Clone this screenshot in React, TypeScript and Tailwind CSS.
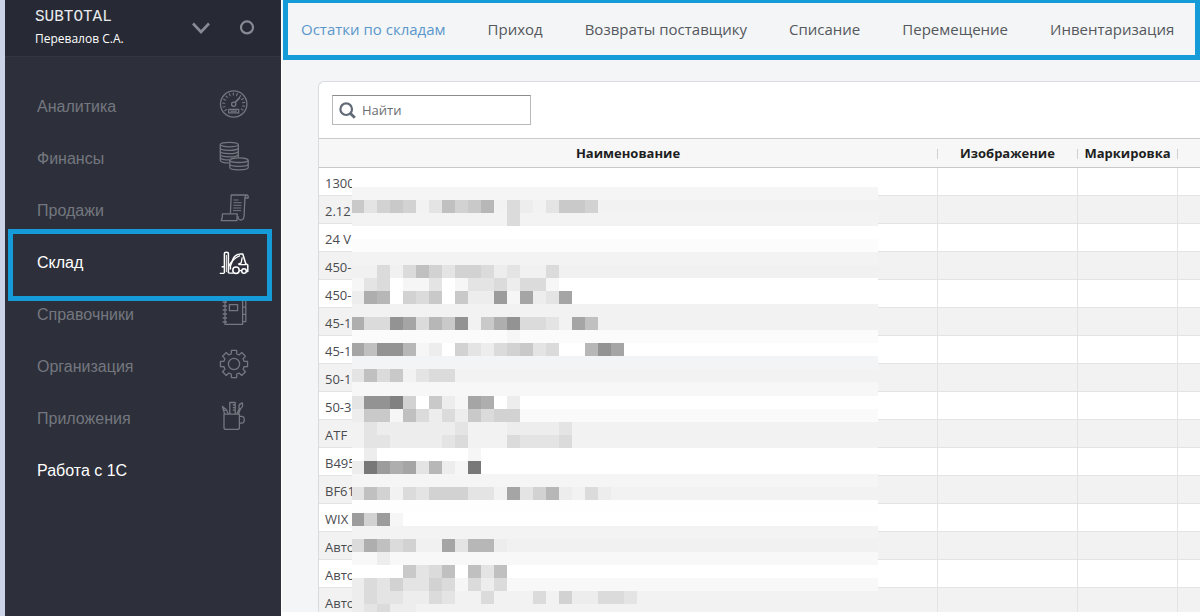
import clsx from "clsx";
import type { ReactNode } from "react";

type MenuItem = { label: string; icon?: ReactNode; state?: "active" | "plain" };

// one string per mosaic line: "." is the row background, 1-f goes from light to dark
type MosaicRow = { base: string; cells: string };

const gearPath = () => {
  const points: string[] = [];
  for (let i = 0; i < 8; i++) {
    const mid = (i * Math.PI) / 4;
    [
      [10.4, -0.27],
      [13.8, -0.19],
      [13.8, 0.19],
      [10.4, 0.27],
    ].forEach(([r, a]) => {
      points.push(
        `${(15 + r! * Math.cos(mid + a!)).toFixed(2)} ${(15 + r! * Math.sin(mid + a!)).toFixed(2)}`,
      );
    });
  }
  return `M${points.join("L")}Z`;
};

const Icon = ({ children }: { children: ReactNode }) => (
  <svg
    viewBox="0 0 30 30"
    className="mb-1.5 h-[30px] w-[30px]"
    fill="none"
    stroke="currentColor"
    strokeWidth="1.3"
    strokeLinejoin="round"
    aria-hidden="true"
  >
    {children}
  </svg>
);

const menu: MenuItem[] = [
  {
    label: "Аналитика",
    icon: (
      <Icon>
        <circle cx="14.7" cy="15" r="13.2" />
        <path
          d="M7 21.5A10 10 0 1 1 22.4 21.5"
          strokeWidth="3"
          strokeDasharray="1.1 2.5"
        />
        <circle cx="14.7" cy="15.3" r="2.1" />
        <path d="M16 13.6L21 8.4" strokeWidth="1.6" />
        <rect x="9.7" y="20.3" width="10" height="3.6" />
        <path d="M11.5 22.1h6.4" />
      </Icon>
    ),
  },
  {
    label: "Финансы",
    icon: (
      <Icon>
        <ellipse cx="10.3" cy="3.6" rx="9" ry="2.3" />
        <path d="M1.3 3.6V19.6c0 1.3 4 2.4 8.6 2.3M19.3 3.6v13" />
        <path d="M1.3 7c0 3.1 18 3.1 18 0M1.3 10.3c0 3.1 18 3.1 18 0M1.3 13.6c0 3.1 18 3.1 18 0M1.3 16.6c0 1.6 4.2 2.4 9 2.3" />
        <ellipse cx="20" cy="19.2" rx="9.2" ry="2.3" />
        <path d="M10.8 19.2v7.4c0 3.1 18.4 3.1 18.4 0v-7.4M10.8 23c0 3.1 18.4 3.1 18.4 0" />
      </Icon>
    ),
  },
  {
    label: "Продажи",
    icon: (
      <Icon>
        <path d="M11.4 20.5L12.2 2H27.4c1.5 0 2.2 1.2 1.7 3h-3.2" />
        <path d="M27.4 2c-1 .6-1.4 1.5-1.5 3l-.8 18c-.3 3-1.4 4-3.3 4-2 0-2.9-1.4-2.6-3.8" />
        <path d="M3.5 20.8h14.8l-.4 6.8H2.2c1-1.8 1.4-4 1.3-6.8Z" />
        <path d="M14.5 7h5M14.5 9.7h8M14.3 12.3h8M14.2 15h8M14 17.6h8" strokeWidth="1" />
      </Icon>
    ),
  },
  {
    label: "Склад",
    state: "active",
    icon: (
      <Icon>
        <path d="M5.4 28V8.8c0-2 4-2 4 0V28" strokeWidth="1.5" />
        <path d="M7.4 10v17" strokeWidth="0.9" />
        <path d="M.8 28.4h4.6M2.6 21.8h2.8" strokeWidth="1.4" />
        <path
          d="M11.4 24.6V21l1.6-4C14.4 11.6 16.8 9 21.4 9h2.4l2.8 9.3 2.2 1.7v6.6h-1.4"
          strokeWidth="1.5"
        />
        <path d="M9.6 21.6C12 16.4 16 12.6 21 10.6M19 19.4l3.2-1.6 1-5.4M20 19.6h7.6" />
        <circle cx="17" cy="25.2" r="3.2" strokeWidth="1.5" />
        <circle cx="25" cy="26" r="2.3" strokeWidth="1.5" />
        <path d="M20.4 25.6h2M9.4 28.2h5" />
      </Icon>
    ),
  },
  {
    label: "Справочники",
    icon: (
      <Icon>
        <path d="M6 2h17.6v25.4H6Z" />
        <path d="M23.6 3h3.2v21.6h-3.2M23.6 10.2h3.2M23.6 17.4h3.2" />
        <rect x="10.4" y="7.6" width="8.2" height="6" />
        <path d="M3.6 5H8M3.6 9H8M3.6 13H8M3.6 17H8M3.6 21H8M3.6 25H8" />
      </Icon>
    ),
  },
  {
    label: "Организация",
    icon: (
      <Icon>
        <path d={gearPath()} />
        <circle cx="15" cy="15" r="5.6" />
      </Icon>
    ),
  },
  {
    label: "Приложения",
    icon: (
      <Icon>
        <path d="M5 13.2h15.4v13.2c0 1.4-.6 2-2 2H7c-1.4 0-2-.6-2-2Z" />
        <path d="M20.4 15.4h2.2c3.6 0 3.6 6.8 0 6.8h-2.2" />
        <path d="M10.8 13V1.5h5.4V13M13.8 4h2.4M13.8 6.6h2.4M13.8 9.2h2.4" />
        <path d="M5.6 13L3.4 5.4l4 3.4L9.4 13M4.6 9.6l2.8-.8" />
        <path d="M17.8 13l2.6-5.6M19.4 13l2-5M20 7.2c-.4-3 .8-4.8 3.4-5.2.6 3-.4 5-2.2 5.8Z" />
      </Icon>
    ),
  },
  { label: "Работа с 1С", state: "plain" },
];

const tabs = [
  "Остатки по складам",
  "Приход",
  "Возвраты поставщику",
  "Списание",
  "Перемещение",
  "Инвентаризация",
];

const names = [
  "1300",
  "2.12",
  "24 V",
  "450-",
  "450-",
  "45-1",
  "45-1",
  "50-1",
  "50-3",
  "ATF",
  "B495",
  "BF61",
  "WIX",
  "Авто",
  "Авто",
  "Авто",
];

const mosaic: MosaicRow[] = [
  { base: "#ffffff", cells: "" },
  { base: "#f5f5f5", cells: "" },
  { base: "#f2f2f2", cells: "63565.37568.42.3665" },
  { base: "#f3f3f3", cells: "............4" },
  { base: "#ffffff", cells: "" },
  { base: "#fcfcfc", cells: "" },
  { base: "#f3f3f3", cells: "" },
  { base: "#f1f1f2", cells: "..4.475355423..4" },
  { base: "#ffffff", cells: "134.113.13342441" },
  { base: "#ffffff", cells: "298.546.622b1a23a" },
  { base: "#f2f2f2", cells: "" },
  { base: "#f2f2f2", cells: "944ca486c.69c443.a7" },
  { base: "#fbfbfb", cells: "............1" },
  { base: "#ffffff", cells: "a7cc812.53245634..8ca" },
  { base: "#f3f4f6", cells: "" },
  { base: "#f2f2f2", cells: "3746.344" },
  { base: "#f7f7f7", cells: "" },
  { base: "#ffffff", cells: "3cce5.621a9.2" },
  { base: "#fafafa", cells: "2661742426455" },
  { base: "#f2f2f2", cells: ".32222223...22223" },
  { base: "#f2f2f2", cells: ".33222234...43334" },
  { base: "#ffffff", cells: ".2.......1" },
  { base: "#ffffff", cells: "2fb9a3821f" },
  { base: "#f5f5f5", cells: "" },
  { base: "#f2f2f3", cells: "375.4355533.a3582.42" },
  { base: "#fefefe", cells: "" },
  { base: "#ffffff", cells: "b5b1" },
  { base: "#f3f3f4", cells: "" },
  { base: "#f1f1f1", cells: "49745..a3882" },
  { base: "#f8f8f8", cells: "..2" },
  { base: "#ffffff", cells: "....6347.737" },
  { base: "#f8f8f8", cells: "243533541424" },
  { base: "#f2f2f2", cells: "24332243..4...4.522443" },
  { base: "#f2f2f2", cells: "23422" },
];

// the lower half sits one pixel further down
const rowTop = (row: number) => row * 13 + (row > 16 ? 1 : 0);

const Mosaic = () => (
  <svg
    width="526"
    height="443"
    viewBox="1 0 526 443"
    shapeRendering="crispEdges"
    className="absolute top-[36px] left-[33px]"
    aria-hidden="true"
  >
    {mosaic.map(({ base, cells }, y) => (
      <g key={y}>
        <rect x="0" y={rowTop(y)} width="527" height="14" fill={base} />
        {cells.split("").map((c, x) => {
          if (c === ".") return null;
          const v = 255 - parseInt(c, 16) * 9;
          return (
            <rect
              key={x}
              x={x * 13}
              y={rowTop(y)}
              width="13"
              height="13"
              fill={`rgb(${v},${v},${v})`}
            />
          );
        })}
      </g>
    ))}
  </svg>
);

const Sidebar = () => (
  <aside className="w-[281px] shrink-0 border-l-5 border-[#ccd3e7] bg-[#2d303a]">
    <div className="flex h-[57px] items-center border-b border-[#343741] bg-[#272a34] pr-[26px] pl-[30px]">
      <div className="flex-1 text-white">
        <p className="pt-1 font-['Liberation_Mono',monospace] text-base leading-5 text-[#e8eaee]">
          SUBTOTAL
        </p>
        <p className="pt-0.5 pb-1 font-['Open_Sans',sans-serif] text-xs leading-5">
          Перевалов С.А.
        </p>
      </div>
      <button aria-label="Меню аккаунта" className="mr-7 text-[#888b93]">
        <svg width="20" height="14" viewBox="0 0 20 14" fill="none" stroke="currentColor" strokeWidth="2.6">
          <path d="M2 2.5l8 8.5 8-8.5" />
        </svg>
      </button>
      <button aria-label="Статус" className="text-[#888b93]">
        <svg width="16" height="16" viewBox="0 0 16 16" fill="none" stroke="currentColor" strokeWidth="2.2">
          <circle cx="8" cy="7.4" r="6" />
        </svg>
      </button>
    </div>
    <nav className="pt-6 font-['Liberation_Sans',sans-serif] text-base">
      {menu.map(({ label, icon, state }) => (
        <a
          key={label}
          href="#"
          className={clsx(
            "relative flex h-13 items-center justify-between pr-8 pl-8",
            state ? "text-white" : "text-[#74777f]",
            state === "active" && "z-10",
          )}
        >
          <span>{label}</span>
          {icon}
          {state === "active" && (
            <span className="absolute -top-2 right-[9px] -bottom-3 left-[3px] border-5 border-[#159bd7]" />
          )}
        </a>
      ))}
    </nav>
  </aside>
);

export default function App() {
  return (
    <div className="flex h-screen overflow-hidden bg-white font-['Open_Sans',sans-serif]">
      <Sidebar />
      <main className="mb-1 ml-px flex min-w-0 flex-1 flex-col overflow-hidden bg-[#f3f5f7]">
        <nav className="ml-px flex h-[60px] shrink-0 items-center gap-[42px] overflow-hidden border-5 border-t-3 border-[#159bd7] pl-[13px] text-[15px] whitespace-nowrap">
          {tabs.map((tab, i) => (
            <a
              key={tab}
              href="#"
              className={i === 0 ? "text-[#5b97cb]" : "text-[#55585c]"}
            >
              {tab}
            </a>
          ))}
        </nav>
        <section className="mt-[21px] ml-9 flex-1 rounded-tl-md border-t border-l border-[#d9dbde] bg-white">
          <div className="px-[13px] py-[13px]">
            <label className="flex h-[30px] w-[199px] items-center gap-1.5 border border-[#b9b9b9] border-t-[#8c8c8c] bg-white pl-[6px]">
              <svg
                width="17"
                height="17"
                viewBox="0 0 17 17"
                fill="none"
                stroke="#626a78"
                strokeWidth="2.2"
                className="shrink-0"
              >
                <circle cx="7.2" cy="7.2" r="5.8" />
                <path d="M11 11l4.8 4.8" strokeWidth="2.8" />
              </svg>
              <input
                type="text"
                placeholder="Найти"
                aria-label="Найти"
                className="w-full min-w-0 pt-0.5 text-[13px] outline-none placeholder:text-[#6b6e73]"
              />
            </label>
          </div>
          <div className="relative">
            <table className="w-full table-fixed border-separate border-spacing-0 text-[13px] text-[#4a4c50]">
              <colgroup>
                <col />
                <col className="w-[140px]" />
                <col className="w-[100px]" />
                <col className="w-[22px]" />
              </colgroup>
              <thead>
                <tr className="h-[30px] bg-[#f7f7f7] text-[#1c1e21]">
                  {["Наименование", "Изображение", "Маркировка", ""].map((title, i) => (
                    <th key={i} className="border-y border-[#c9cacc] p-0 pt-0.5 font-bold">
                      <div
                        className={clsx(
                          "flex h-[10px] items-center justify-center",
                          i < 3 && "border-r border-[#d0d0d0]",
                        )}
                      >
                        {title}
                      </div>
                    </th>
                  ))}
                </tr>
              </thead>
              <tbody>
                {names.map((name, i) => (
                  <tr key={i} className="h-7 odd:bg-white even:bg-[#f2f2f2]">
                    <td className="border-r border-b border-[#e3e3e4] p-0 pt-1 pl-[6px]">{name}</td>
                    <td className="border-r border-b border-[#e3e3e4] p-0" />
                    <td className="border-r border-b border-[#e3e3e4] p-0" />
                    <td className="border-b border-[#e3e3e4] p-0" />
                  </tr>
                ))}
              </tbody>
            </table>
            <Mosaic />
          </div>
        </section>
      </main>
    </div>
  );
}
